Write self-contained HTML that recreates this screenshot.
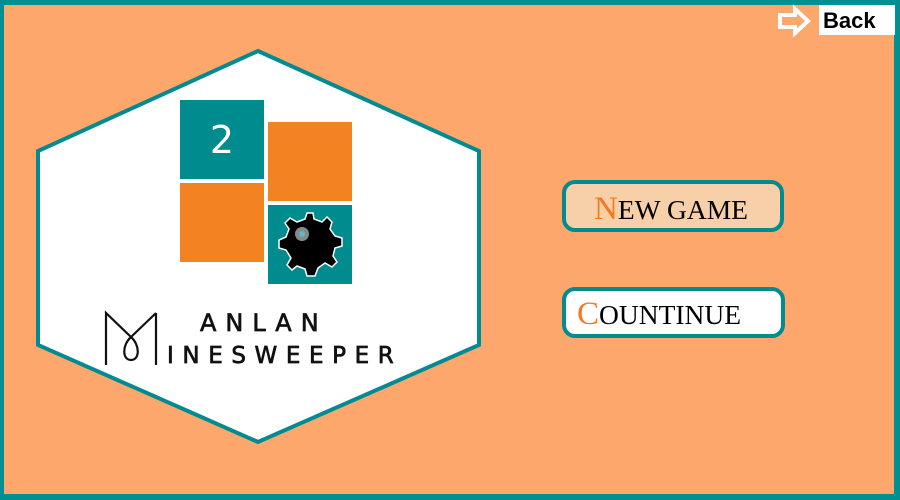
<!DOCTYPE html>
<html><head><style>
body{margin:0;width:900px;height:500px;overflow:hidden;background:#fea76c;position:relative;font-family:"Liberation Sans",sans-serif}
.frame{position:absolute;left:0;top:0;width:900px;height:500px;box-sizing:border-box;border:solid #009092;border-width:5px 6px 6px 4px}
.t{font-family:"DejaVu Sans","Liberation Sans",sans-serif;position:absolute;color:#111;font-size:23px;white-space:nowrap;-webkit-text-stroke:0.7px #111}
.btn{position:absolute;box-sizing:border-box;border:4px solid #008b8f;border-radius:13px;font-family:"Liberation Serif",serif;font-size:27.5px;color:#000;white-space:nowrap}
.btn span{color:#f57a1e;font-size:33px}
</style></head><body>
<div class="frame"></div>
<svg style="position:absolute;left:0;top:0" width="900" height="500">
<polygon points="258,51 38,151 38,345 258,442 479,345 479,151" fill="#fff" stroke="#008b92" stroke-width="4"/>
<rect x="180" y="100" width="84" height="79" fill="#008b8f"/>
<rect x="268" y="122" width="84" height="79" fill="#f38320"/>
<rect x="180" y="183" width="84" height="79" fill="#f38320"/>
<rect x="268" y="205" width="84" height="79" fill="#008b8f"/>
<text x="222" y="153" font-family="DejaVu Sans" font-size="38" fill="#fff" text-anchor="middle">2</text>
<g transform="translate(310,244)">
<polygon points="-3,-31 3,-31 4,-25 12,-22 17,-27 22,-22 20,-15 25,-8 32,-6 32,2 25,4 23,12 27,18 22,23 15,19 8,24 5,32 -3,32 -5,25 -13,22 -18,26 -23,21 -19,14 -24,6 -31,4 -31,-4 -24,-7 -21,-15 -25,-21 -20,-26 -13,-22 -5,-25" fill="#000" stroke="#fff" stroke-width="1.5"/>
<circle cx="-8" cy="-10" r="7" fill="#888"/><circle cx="-8" cy="-10" r="3" fill="#5bc"/>
</g>
<path d="M106,365 V313 L131,337 M156,313 V365 M156,313 L131,337 C122,345 122,360 131,360 C140,360 140,345 131,337" fill="none" stroke="#111" stroke-width="2.2"/>
<path d="M780,15 H795 V9 L808,21 L795,33 V27 H780 Z" fill="none" stroke="#fff" stroke-width="4"/>
<rect x="819" y="5" width="76" height="30" fill="#fff"/>
</svg>
<div class="t" style="left:200px;top:309px;letter-spacing:9px;font-size:24px">ANLAN</div>
<div class="t" style="left:167px;top:343px;letter-spacing:8.6px;font-size:23px">INESWEEPER</div>
<div style="position:absolute;left:823px;top:8px;font-weight:bold;font-size:22px;color:#000">Back</div>
<div class="btn" style="left:562px;top:180px;width:222px;height:52px;background:#f7cfa8;padding:7px 0 0 28px"><span>N</span>EW GAME</div>
<div class="btn" style="left:562px;top:287px;width:223px;height:51px;background:#fff;padding:5px 0 0 11px"><span>C</span>OUNTINUE</div>
</body></html>
